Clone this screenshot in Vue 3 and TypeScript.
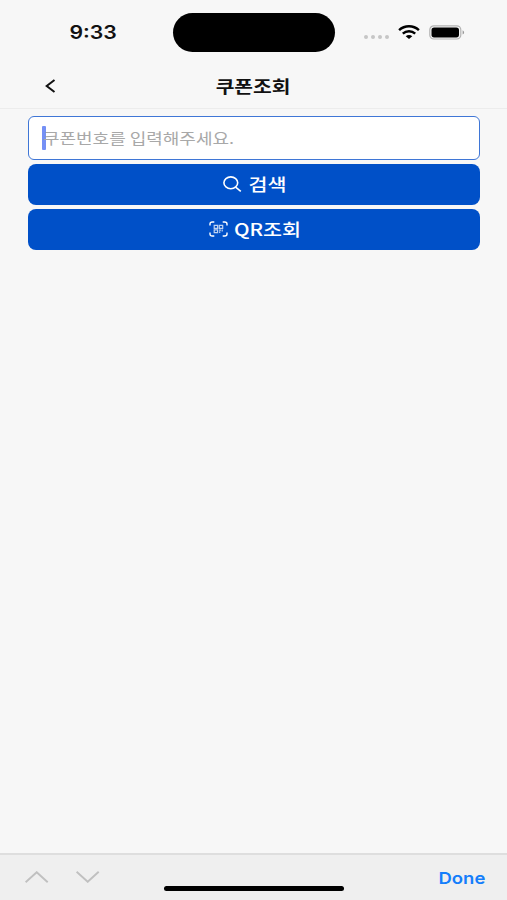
<script setup lang="ts">
import { ref } from 'vue'

const coupon = ref<string>('')
const signalDots: number[] = [1, 2, 3, 4]
</script>

<template>
  <div class="screen">
    <div class="status">
      <div class="time"><span class="wide">9:33</span></div>
      <div class="island"></div>
      <div class="indicators">
        <div class="signal"><i v-for="dot in signalDots" :key="dot"></i></div>
        <svg class="wifi" width="22" height="15" viewBox="0 0 22 15">
          <g fill="none" stroke="#000" stroke-width="2.5">
            <path d="M1.1 5.1C6.7 0 15.3 0 20.9 5.1" />
            <path d="M4.8 8.6c3.5-3.1 8.9-3.1 12.4 0" />
          </g>
          <path d="M7.7 11.2c1.9-1.6 4.7-1.6 6.6 0L11 14.1z" fill="#000" />
        </svg>
        <svg class="battery" width="36" height="15" viewBox="0 0 36 15">
          <rect x=".8" y=".8" width="31" height="13.2" rx="4" fill="none" stroke="#b2b2b2" stroke-width="1.2" />
          <rect x="2.5" y="2.4" width="27.5" height="10" rx="2.6" fill="#000" />
          <path d="M33.6 5.3c2 .8 2 3.5 0 4.3z" fill="#999" />
        </svg>
      </div>
    </div>

    <header class="header">
      <button class="back" aria-label="뒤로">
        <svg width="12" height="14" viewBox="0 0 12 14">
          <path d="M9.5 1 1.7 7l7.8 6" fill="none" stroke="#111" stroke-width="2" />
        </svg>
      </button>
      <h1><span class="wide">쿠폰조회</span></h1>
    </header>

    <main class="content">
      <label class="field">
        <span class="caret"></span>
        <input v-model="coupon" class="entry" placeholder="쿠폰번호를 입력해주세요." />
      </label>
      <button class="action search">
        <svg width="19" height="16" viewBox="0 0 19 16" fill="none" stroke="#fff" stroke-width="1.6">
          <ellipse cx="7.8" cy="6.8" rx="6.9" ry="5.9" />
          <path d="m12.6 11.1 5.2 4.2" />
        </svg>
        <span class="wide">검색</span>
      </button>
      <button class="action qr">
        <svg width="19" height="16" viewBox="0 0 19 16" fill="none" stroke="#fff">
          <path
            d="M1 4.6V3q0-2 2.3-2h2M13.7 1h2Q18 1 18 3v1.6M18 11.4V13q0 2-2.3 2h-2M5.3 15h-2Q1 15 1 13v-1.6"
            stroke-width="1.4"
          />
          <path
            d="M5.2 4.4h3.4v3H5.2zM10.3 4.4h3.4v3h-3.4zM5.2 8.9h3.4v2.8H5.2zM10 9.2h2M13.2 8.6v1.8M10.7 10.3v1.8"
            stroke-width="1.2"
            stroke-opacity=".75"
          />
        </svg>
        <span class="wide">QR조회</span>
      </button>
    </main>

    <footer class="toolbar">
      <div class="arrows">
        <svg width="24" height="12" viewBox="0 0 24 12">
          <path d="M.6 11.2 11.7 1.2l11 10" fill="none" stroke="#c0c0c0" stroke-width="1.9" />
        </svg>
        <svg width="24" height="12" viewBox="0 0 24 12">
          <path d="M.6.8l11.1 10 11-10" fill="none" stroke="#c0c0c0" stroke-width="1.9" />
        </svg>
      </div>
      <div class="home"></div>
      <button class="done"><span class="wide">Done</span></button>
    </footer>
  </div>
</template>

<style>
body {
  margin: 0;
  background: #f7f7f7;
}
</style>

<style scoped>
.screen {
  display: flex;
  flex-direction: column;
  box-sizing: border-box;
  width: 507px;
  height: 900px;
  overflow: hidden;
  background: #f7f7f7;
  color: #111;
  font-family: Inter, "Noto Sans CJK KR", sans-serif;
}

button {
  padding: 0;
  border: 0;
  background: none;
  color: inherit;
  font: inherit;
}

svg {
  display: block;
  flex: none;
}

.wide {
  display: inline-block;
  white-space: nowrap;
  transform: scaleX(1.222);
}

.status {
  display: grid;
  grid-template-columns: 173px 162px 1fr;
  align-items: center;
  height: 64px;
}

.time {
  padding: 1px 0 0 14px;
  text-align: center;
  font-size: 18px;
  font-weight: 600;
  line-height: 24px;
}

.time .wide {
  transform: scaleX(1.18);
}

.island {
  height: 39px;
  border-radius: 20px;
  background: #000;
}

.indicators {
  display: flex;
  align-items: center;
  padding-left: 29px;
}

.signal {
  display: flex;
  gap: 3px;
  width: 34px;
  padding-top: 9px;
}

.signal i {
  width: 4px;
  height: 4px;
  border-radius: 50%;
  background: #c6c6c6;
}

.battery {
  margin-left: 9px;
}

.header {
  display: grid;
  grid-template-columns: 100px 1fr 100px;
  align-items: center;
  box-sizing: border-box;
  height: 45px;
  border-bottom: 1px solid #ececec;
}

.back {
  justify-self: start;
  margin-left: 45px;
}

h1 {
  margin: 0;
  text-align: center;
  font-family: "Noto Sans CJK KR", sans-serif;
  font-size: 16.9px;
  font-weight: 700;
  line-height: 24px;
}

h1 .wide {
  transform: scaleX(1.205);
}

.content {
  display: flex;
  flex: 1;
  flex-direction: column;
  gap: 4px;
  padding: 7px 27px 0 28px;
}

.field {
  display: flex;
  align-items: center;
  box-sizing: border-box;
  height: 44px;
  padding-left: 13px;
  overflow: hidden;
  border: 1.5px solid #3f76d6;
  border-radius: 6px;
  background: #fff;
}

.caret {
  flex: none;
  width: 4px;
  height: 24px;
  border-radius: 1px;
  background: #7590f5;
}

.entry {
  width: 300px;
  margin-left: -3px;
  padding: 0;
  border: 0;
  outline: 0;
  background: none;
  font-family: "Noto Sans CJK KR", sans-serif;
  font-size: 14.8px;
  line-height: 24px;
  transform: scaleX(1.215);
  transform-origin: left center;
}

.entry::placeholder {
  color: #a8a8a8;
  opacity: 1;
}

.action {
  display: flex;
  align-items: center;
  justify-content: center;
  gap: 10px;
  height: 41px;
  padding-bottom: 2px;
  border-radius: 8px;
  background: #0050c8;
  color: #fff;
  font-family: "Noto Sans CJK KR", sans-serif;
  font-size: 16.9px;
  font-weight: 500;
}

.action svg {
  margin-top: 1px;
}

.search {
  padding-right: 1px;
}

.qr {
  gap: 12px;
  padding-right: 5px;
}

.toolbar {
  display: grid;
  grid-template-columns: 164px 180px 1fr;
  box-sizing: border-box;
  height: 47px;
  border-top: 2px solid #dedede;
  background: #efefef;
}

.arrows {
  display: flex;
  gap: 27px;
  padding: 16px 0 0 25px;
}

.home {
  height: 5px;
  margin-top: 31px;
  border-radius: 3px;
  background: #000;
}

.done {
  justify-self: end;
  align-self: start;
  margin: 11px 24px 0 0;
  color: #147efb;
  font-size: 16.5px;
  font-weight: 600;
  line-height: 24px;
}

.done .wide {
  transform: scaleX(1.12);
}
</style>
